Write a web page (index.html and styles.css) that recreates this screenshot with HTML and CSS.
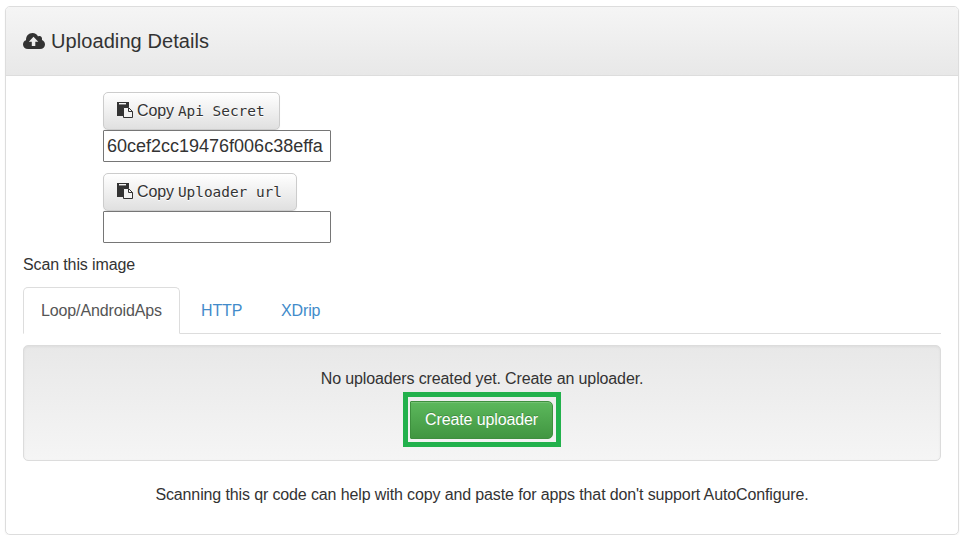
FILE: index.html
```html
<!DOCTYPE html>
<html lang="en">
<head>
<meta charset="utf-8">
<title>Uploading Details</title>
<link rel="stylesheet" href="styles.css">
</head>
<body>
<section class="panel">
  <header class="panel-heading">
    <svg class="cloud" viewBox="0 0 22 17"><path fill="#333" d="M5 16C2 16 0 14.200 0 11.500c0-2.200 1.200-3.800 3-4.300C2.900 3 5.600 0 9.500 0c2.600 0 4.600 1.400 5.500 3.500 2.300-1.200 4.500.5 4 3.500 1.800.7 3 2.200 3 4.500 0 2.700-2 4.500-5 4.500Z"/><path fill="#eee" d="M10.500 3.800 5.800 8.800h3V13h3.500V8.800h3Z"/></svg>
    <h1 class="title">Uploading Details</h1>
  </header>
  <div class="panel-body">
    <div class="fields">
      <div class="field">
        <button class="btn btn-api"><svg class="paste" viewBox="0 0 17 17"><path fill="#333" d="M0 0h12v5H8v9H0Z"/><path fill="#f6f6f6" d="M2 1h7v1.400H2Z"/><path fill="#f3f3f3" stroke="#333" d="M6.500 5.500h5l4 4v6h-9Z"/><path fill="none" stroke="#333" d="M11.500 5.500v4h4"/></svg><span>Copy</span><code>Api Secret</code></button>
        <input class="text-input" type="text" value="60cef2cc19476f006c38effa" aria-label="Api Secret">
      </div>
      <div class="field">
        <button class="btn btn-url"><svg class="paste" viewBox="0 0 17 17"><path fill="#333" d="M0 0h12v5H8v9H0Z"/><path fill="#f6f6f6" d="M2 1h7v1.400H2Z"/><path fill="#f3f3f3" stroke="#333" d="M6.500 5.500h5l4 4v6h-9Z"/><path fill="none" stroke="#333" d="M11.500 5.500v4h4"/></svg><span>Copy</span><code>Uploader url</code></button>
        <input class="text-input" type="text" value="" aria-label="Uploader url">
      </div>
    </div>
    <p class="scan">Scan this image</p>
    <nav class="tabs">
      <a class="tab active">Loop/AndroidAps</a>
      <a class="tab tab-http">HTTP</a>
      <a class="tab">XDrip</a>
    </nav>
    <div class="well">
      <p class="empty">No uploaders created yet. Create an uploader.</p>
      <div class="highlight"><button class="create">Create uploader</button></div>
    </div>
    <p class="note">Scanning this qr code can help with copy and paste for apps that don't support AutoConfigure.</p>
  </div>
</section>
</body>
</html>
```
FILE: styles.css
```css
* { box-sizing: border-box; }
body {
  margin: 0;
  padding: 6px 6px 0 5px;
  background: #fff;
  color: #333;
  font: 16px/23px "Liberation Sans", Arial, sans-serif;
  letter-spacing: -.125px;
}
p { margin: 0; }
.panel {
  height: 529px;
  border: 1px solid #ddd;
  border-radius: 5px;
  box-shadow: 0 1px 2px rgba(0, 0, 0, .06);
}
.panel-heading {
  display: flex;
  align-items: center;
  height: 69px;
  padding: 0 17px;
  border-bottom: 1px solid #ddd;
  border-radius: 4px 4px 0 0;
  background: linear-gradient(#f5f5f5, #e8e8e8);
}
.cloud { width: 22px; height: 17px; margin-right: 6px; }
.title { margin: 0; font-size: 20px; font-weight: 400; line-height: 24px; letter-spacing: .08px; }
.panel-body { padding: 16px 17px 0; }
.fields { padding-left: 80px; }
.field { display: flex; flex-direction: column; align-items: flex-start; margin-bottom: 11px; }
.btn {
  display: flex;
  align-items: center;
  height: 38px;
  padding: 0 0 2px 13px;
  border: 1px solid #ccc;
  border-radius: 5px;
  background: linear-gradient(#fff, #e0e0e0);
  box-shadow: inset 0 1px 0 rgba(255, 255, 255, .15), 0 1px 1px rgba(0, 0, 0, .075);
  color: #333;
  font: 16px/23px "Liberation Sans", Arial, sans-serif;
  letter-spacing: -.1px;
  text-shadow: 0 1px 0 #fff;
  white-space: nowrap;
}
.btn-api { width: 177px; }
.btn-url { width: 194px; }
.paste { flex: none; width: 17px; height: 17px; margin-right: 3px; }
.btn code { margin: 2px 0 0 4px; font: 14.400px/20px "DejaVu Sans Mono", monospace; letter-spacing: 0; }
.text-input {
  width: 228px;
  height: 32px;
  padding: 0 3px;
  border: 1px solid #767676;
  border-radius: 1px;
  background: #fff;
  color: #333;
  font: 18px "Liberation Sans", Arial, sans-serif;
}
.scan { margin: -1px 0 11px; }
.tabs { display: flex; height: 47px; border-bottom: 1px solid #ddd; }
.tab {
  height: 47px;
  margin-right: 2px;
  padding: 11px 17px;
  border: 1px solid transparent;
  border-radius: 5px 5px 0 0;
  color: #428bca;
}
.tab-http { width: 79px; padding-left: 18px; margin-right: 2px; }
.active { width: 157px; border-color: #ddd; border-bottom-color: #fff; background: #fff; color: #555; }
.well {
  display: flex;
  flex-direction: column;
  align-items: center;
  height: 116px;
  margin: 11px 0 22px;
  padding-top: 21px;
  border: 1px solid #dcdcdc;
  border-radius: 5px;
  background: linear-gradient(#e8e8e8, #f5f5f5);
  box-shadow: inset 0 1px 3px rgba(0, 0, 0, .05);
}
.highlight { width: 158px; height: 55px; margin-top: 2px; padding: 4px 2px; border: 5px solid #22b14c; }
.create {
  display: block;
  width: 143px;
  height: 38px;
  padding: 0 0 1px;
  border: 1px solid #3e8f3e;
  border-radius: 1px 5px 5px 1px;
  background: linear-gradient(#5cb85c, #419641);
  box-shadow: inset 0 1px 0 rgba(255, 255, 255, .15);
  color: #fff;
  font: 16px/23px "Liberation Sans", Arial, sans-serif;
  letter-spacing: -.125px;
  text-shadow: 0 -1px 0 rgba(0, 0, 0, .2);
}
.note { text-align: center; }
```
